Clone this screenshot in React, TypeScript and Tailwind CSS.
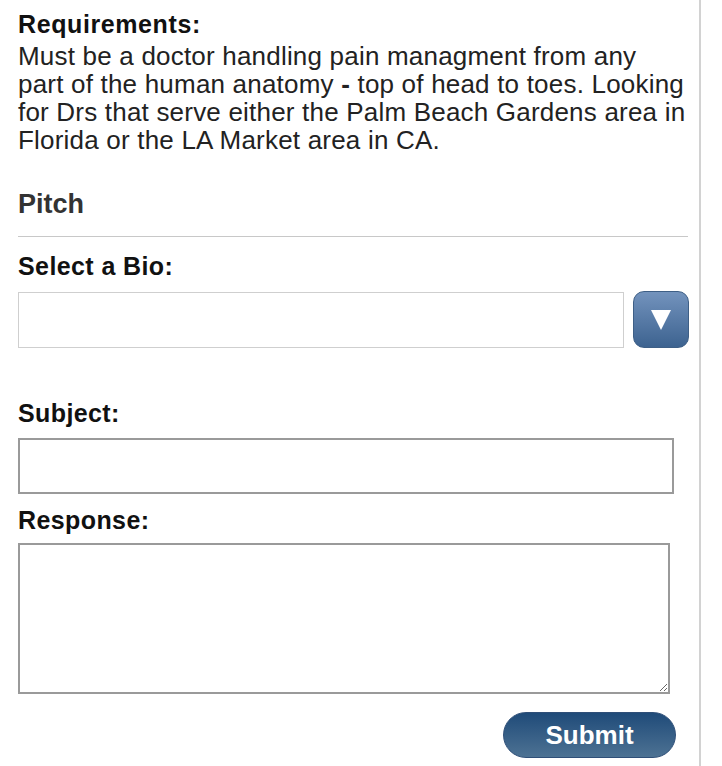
export default function App() {
  return (
    <div className="min-h-[766px] w-[722px] bg-white font-['Liberation_Sans',Arial,sans-serif] text-[#1a1a1a]">
      <div className="min-h-[766px] w-[701px] border-r-2 border-[#d2d2d2] pl-[18px] pr-[10px] pt-[10px]">
        {/* Requirements */}
        <h3 className="text-[25px] font-bold leading-[28px] tracking-[0.6px] text-[#111]">Requirements:</h3>
        <p className="mt-[4px] text-[26px] leading-[28px] tracking-[0.2px] text-[#222]">
          Must be a doctor handling pain managment from any part of the human
          anatomy <span className="font-bold">-</span> top of head to toes. Looking for Drs that serve either
          the Palm Beach Gardens area in Florida or the LA Market area in CA.
        </p>

        {/* Pitch */}
        <h2 className="mt-[34px] text-[27px] font-bold leading-[32px] text-[#333]">
          Pitch
        </h2>
        <div className="mt-[16px] h-px w-[670px] bg-[#c8c8c8]" />

        <label className="mt-[15px] block text-[25px] font-bold leading-[28px] tracking-[0.4px] text-[#111]">
          Select a Bio:
        </label>
        <div className="mt-[11px] flex items-center gap-[9px]">
          <div className="h-[56px] w-[606px] border border-[#cfcfcf] bg-white" />
          <button className="flex h-[57px] w-[56px] items-center justify-center rounded-[11px] border border-[#3e5f86] bg-gradient-to-b from-[#7393bd] to-[#3d6390]">
            <svg width="22" height="22" viewBox="0 0 22 22">
              <path d="M1 1 H21 L11 21 Z" fill="white" />
            </svg>
          </button>
        </div>

        <label className="mt-[51px] block text-[25px] font-bold leading-[28px] tracking-[0.4px] text-[#111]">
          Subject:
        </label>
        <input
          type="text"
          className="mt-[11px] block h-[56px] w-[656px] border-2 border-[#9a9a9a] bg-white"
        />

        <label className="mt-[12px] block text-[25px] font-bold leading-[28px] tracking-[0.4px] text-[#111]">
          Response:
        </label>
        <textarea className="mt-[9px] block h-[151px] w-[652px] resize border-2 border-[#9a9a9a] bg-white" />

        <div className="mt-[18px] flex justify-end pr-[13px]">
          <button className="h-[46px] w-[173px] rounded-full border border-[#2f4f78] bg-gradient-to-b from-[#1f4b79] to-[#4d7293] text-[26px] font-bold text-white">
            Submit
          </button>
        </div>
      </div>
    </div>
  );
}
